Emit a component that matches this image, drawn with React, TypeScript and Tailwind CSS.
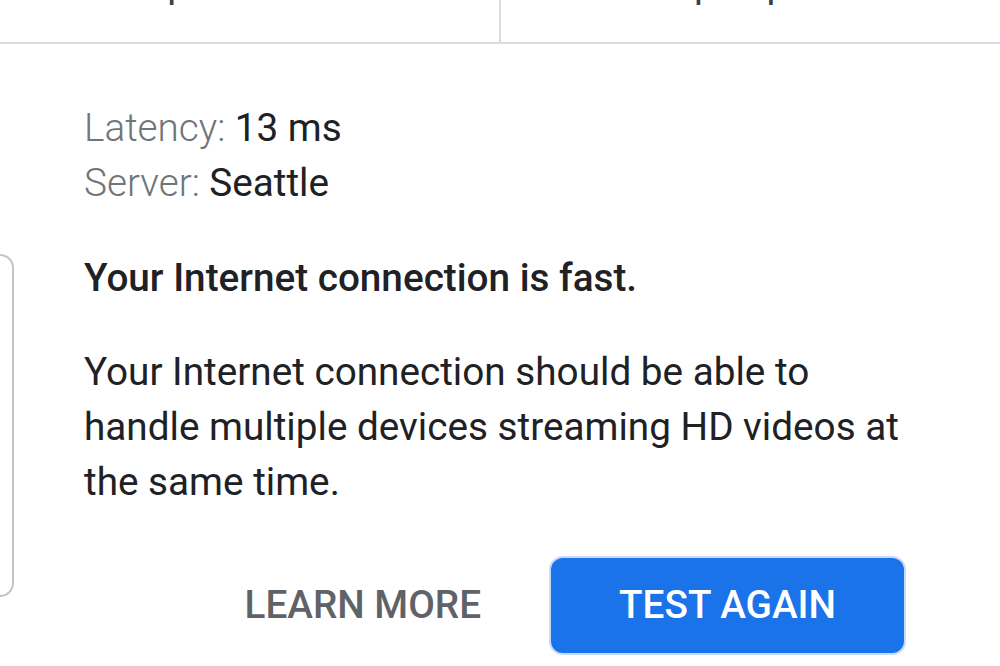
import React from "react";

export default function App() {
  return (
    <div
      className="w-[1000px] h-[666px] overflow-hidden bg-white text-[#202124]"
      style={{ fontFamily: "Roboto, 'Noto Sans', sans-serif" }}
    >
      {/* top table row cut off */}
      <div className="flex h-[44px] border-b-2 border-[#dadce0] overflow-hidden">
        <div className="w-[501px] border-r-2 border-[#dadce0] flex justify-center">
          <div className="text-[38.7px] leading-[38px] mt-[-35px] text-[#3c4043] whitespace-nowrap">Mbps download</div>
        </div>
        <div className="flex-1 flex justify-center">
          <div className="text-[38.7px] leading-[38px] mt-[-35px] text-[#3c4043] whitespace-nowrap">Mbps upload</div>
        </div>
      </div>

      <div className="flex items-start">
        <div className="w-[14px] h-[343px] mt-[210px] border-2 border-l-0 border-[#c4c4c4] rounded-r-[14px] shrink-0" />
        <div className="ml-[70px] flex-1 pt-[56px]">
          <div className="text-[38.7px] leading-[55px]">
            <div>
              <span className="font-light text-[#70757a]">Latency: </span>
              <span>13 ms</span>
            </div>
            <div>
              <span className="font-light text-[#70757a]">Server: </span>
              <span>Seattle</span>
            </div>
          </div>
          <div className="mt-[40px] text-[38.7px] leading-[55px] font-medium">
            Your Internet connection is fast.
          </div>
          <div className="mt-[39px] text-[38.7px] leading-[55px] w-[830px]">
            Your Internet connection should be able to handle multiple devices streaming HD videos at the same time.
          </div>
          <div className="mt-[49px] flex items-center justify-end pr-[96px] gap-[70px]">
            <button className="text-[38.7px] font-medium text-[#5f6368] uppercase">Learn more</button>
            <button className="w-[353px] h-[95px] rounded-[12px] bg-[#1a73e8] text-white text-[38.7px] font-medium uppercase ring-2 ring-[#c6dafc]">
              Test again
            </button>
          </div>
        </div>
      </div>
    </div>
  );
}
